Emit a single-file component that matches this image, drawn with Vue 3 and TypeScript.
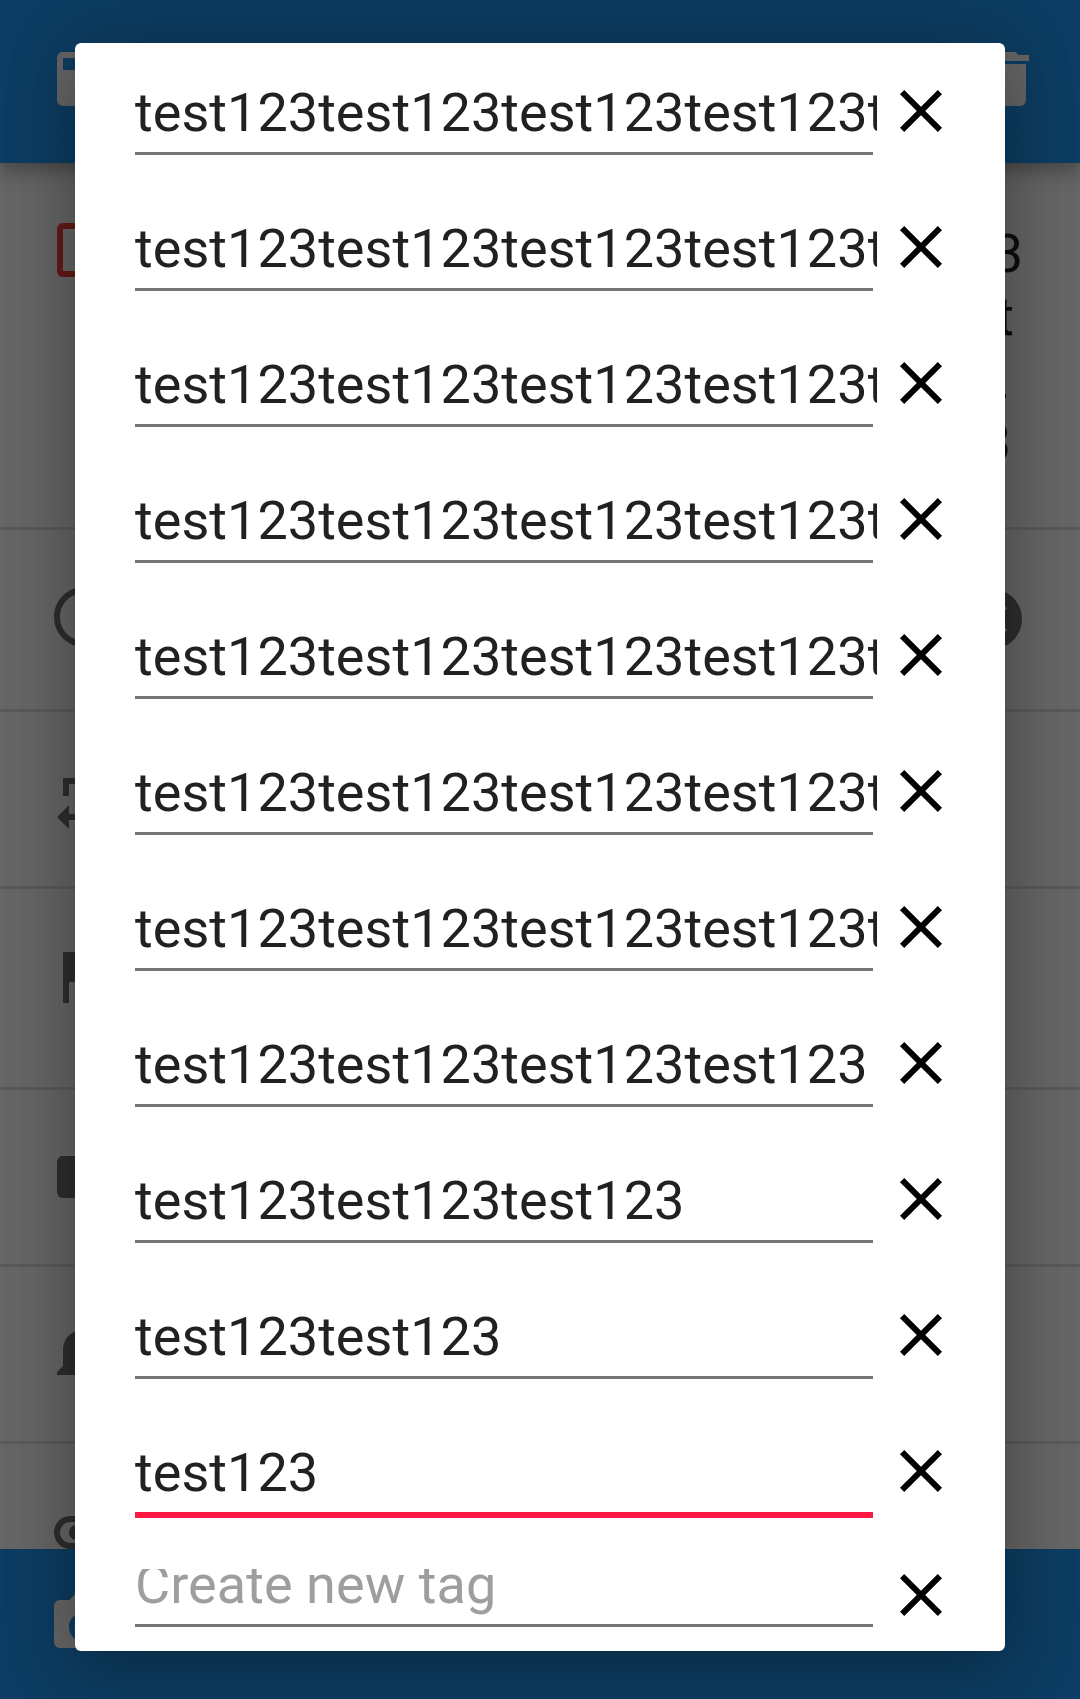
<script setup lang="ts">
interface Tag {
  text: string
  focused?: boolean
}

interface DetailRow {
  name: string
  height: number
  iconTop: number
  path: string
  clearable?: boolean
}

const repeated = (count: number): string => 'test123'.repeat(count)

const tags: Tag[] = [
  ...[11, 10, 9, 8, 7, 6, 5, 4, 3, 2].map((n) => ({ text: repeated(n) })),
  { text: repeated(1), focused: true },
]

const titleEnds = [
  { text: '3', gap: 57 },
  { text: 't', gap: 66 },
  { text: '2', gap: 72 },
  { text: '3', gap: 69 },
]

const icons = {
  save: 'M17 3H5c-1.11 0-2 .9-2 2v14c0 1.1.89 2 2 2h14c1.1 0 2-.9 2-2V7l-4-4zm-5 16c-1.66 0-3-1.34-3-3s1.34-3 3-3 3 1.34 3 3-1.34 3-3 3zm3-10H5V5h10v4z',
  trash: 'M6 19c0 1.1.9 2 2 2h8c1.1 0 2-.9 2-2V7H6v12zM19 4h-3.5l-1-1h-5l-1 1H5v2h14V4z',
  checkbox: 'M19 5v14H5V5h14m0-2H5c-1.1 0-2 .9-2 2v14c0 1.1.9 2 2 2h14c1.1 0 2-.9 2-2V5c0-1.1-.9-2-2-2z',
  close: 'M19 6.41L17.59 5 12 10.59 6.41 5 5 6.41 10.59 12 5 17.59 6.41 19 12 13.41 17.59 19 19 17.59 13.41 12z',
  cancel: 'M12 2C6.47 2 2 6.47 2 12s4.47 10 10 10 10-4.47 10-10S17.53 2 12 2zm5 13.59L15.59 17 12 13.41 8.41 17 7 15.59 10.59 12 7 8.41 8.41 7 12 10.59 15.59 7 17 8.41 13.41 12 17 15.59z',
  camera: 'M9 2L7.17 4H4c-1.1 0-2 .9-2 2v12c0 1.1.9 2 2 2h16c1.1 0 2-.9 2-2V6c0-1.1-.9-2-2-2h-3.17L15 2H9zm3 16c-2.76 0-5-2.24-5-5s2.24-5 5-5 5 2.24 5 5-2.24 5-5 5zM12 9.8a3.2 3.2 0 1 0 0 6.4 3.2 3.2 0 0 0 0-6.4z',
}

const details: DetailRow[] = [
  { name: 'time', height: 182, iconTop: 51, clearable: true, path: 'M11.99 2C6.47 2 2 6.48 2 12s4.47 10 9.99 10C17.52 22 22 17.52 22 12S17.52 2 11.99 2zM12 20c-4.42 0-8-3.58-8-8s3.58-8 8-8 8 3.58 8 8-3.58 8-8 8zm.5-13H11v6l5.25 3.15.75-1.23-4.5-2.67z' },
  { name: 'repeat', height: 177, iconTop: 51, path: 'M7 7h10v3l4-4-4-4v3H5v6h2V7zm10 10H7v-3l-4 4 4 4v-3h12v-6h-2v4z' },
  { name: 'priority', height: 201, iconTop: 51, path: 'M14.4 6L14 4H5v17h2v-7h5.6l.4 2h7V6z' },
  { name: 'tags', height: 177, iconTop: 51, path: 'M17.63 5.84C17.27 5.33 16.67 5 16 5L5 5.01C3.9 5.01 3 5.9 3 7v10c0 1.1.9 1.99 2 1.99L16 19c.67 0 1.27-.33 1.63-.84L22 12l-4.37-6.16z' },
  { name: 'reminder', height: 177, iconTop: 51, path: 'M11.5 22c1.1 0 2-.9 2-2h-4c0 1.1.9 2 2 2zm6.5-6v-5.5c0-3.07-2.13-5.64-5-6.32V3.5c0-.83-.67-1.5-1.5-1.5S10 2.67 10 3.5v.68c-2.87.68-5 3.25-5 6.32V16l-2 2v1h17v-1l-2-2z' },
  { name: 'attachment', height: 105, iconTop: 51, path: 'M2 12.5C2 9.46 4.46 7 7.5 7H18c2.21 0 4 1.79 4 4s-1.79 4-4 4H9.5C8.12 15 7 13.88 7 12.5S8.12 10 9.5 10H17v2H9.41c-.55 0-.55 1 0 1H18c1.1 0 2-.9 2-2s-.9-2-2-2H7.5C5.57 9 4 10.57 4 12.5S5.57 16 7.5 16H17v2H7.5C4.46 18 2 15.54 2 12.5z' },
]
</script>

<template>
  <div class="screen">
    <header class="app-bar">
      <svg class="icon" viewBox="0 0 24 24"><path :d="icons.save" /></svg>
      <svg class="icon" viewBox="0 0 24 24"><path :d="icons.trash" /></svg>
    </header>

    <main class="content">
      <section class="title-row">
        <svg class="icon checkbox" viewBox="0 0 24 24"><path :d="icons.checkbox" /></svg>
        <div class="title">
          <span v-for="(line, i) in titleEnds" :key="i" :style="{ paddingRight: line.gap + 'px' }">{{ line.text }}</span>
        </div>
      </section>
      <section
        v-for="row in details"
        :key="row.name"
        class="detail-row"
        :style="{ height: row.height + 'px', paddingTop: row.iconTop + 'px' }"
      >
        <svg class="icon" viewBox="0 0 24 24"><path :d="row.path" /></svg>
        <svg v-if="row.clearable" class="icon clear" viewBox="0 0 24 24"><path :d="icons.cancel" /></svg>
      </section>
    </main>

    <footer class="bottom-bar">
      <svg class="icon" viewBox="0 0 24 24"><path :d="icons.camera" /></svg>
    </footer>

    <div class="dialog" role="dialog">
      <div v-for="(tag, i) in tags" :key="i" class="tag-row">
        <div class="field" :class="{ focused: tag.focused }">
          <div class="value">{{ tag.text }}</div>
          <div class="underline"></div>
        </div>
        <svg class="icon" viewBox="0 0 24 24"><path :d="icons.close" /></svg>
      </div>
      <div class="tag-row new-row">
        <div class="field">
          <div class="value hint">Create new tag</div>
          <div class="underline"></div>
        </div>
        <svg class="icon" viewBox="0 0 24 24"><path :d="icons.close" /></svg>
      </div>
    </div>
  </div>
</template>

<style>
body {
  margin: 0;
  background: #666;
}
</style>

<style scoped>
.screen {
  position: relative;
  display: flex;
  flex-direction: column;
  width: 1080px;
  height: 1699px;
  overflow: hidden;
  background: #666;
  font-family: Roboto, sans-serif;
  font-size: 54px;
}

.icon {
  display: block;
  flex: none;
  width: 72px;
  height: 72px;
  fill: currentColor;
}

.app-bar {
  position: relative;
  z-index: 1;
  box-sizing: border-box;
  display: flex;
  justify-content: space-between;
  height: 163px;
  padding: 43px 36px 0 48px;
  color: #666;
  background: #0d3d62;
  box-shadow: 0 8px 18px rgba(0, 0, 0, 0.3);
}

.content {
  flex: none;
  height: 1386px;
  overflow: hidden;
  color: #2e2e2e;
}

.title-row {
  box-sizing: border-box;
  display: flex;
  justify-content: space-between;
  height: 367px;
  padding: 51px 0 0 48px;
  border-bottom: 3px solid #5a5a5a;
}

.checkbox {
  color: #651b17;
}

.title {
  display: flex;
  flex-direction: column;
  align-items: flex-end;
  margin-top: 8px;
  color: #0e0e0e;
  line-height: 63px;
}

.detail-row {
  box-sizing: border-box;
  display: flex;
  justify-content: space-between;
  padding: 0 52px 0 48px;
  border-bottom: 3px solid #5a5a5a;
}

.detail-row:last-child {
  border-bottom: 0;
}

.clear {
  margin-top: 2px;
}

.bottom-bar {
  box-sizing: border-box;
  flex: none;
  height: 150px;
  padding: 39px 48px 0;
  color: #666;
  background: #0d3d62;
}

.dialog {
  position: absolute;
  z-index: 2;
  top: 43px;
  left: 75px;
  box-sizing: border-box;
  width: 930px;
  height: 1608px;
  padding: 30px 0 0 60px;
  overflow: hidden;
  border-radius: 6px;
  background: #fff;
  box-shadow:
    0 0 72px rgba(0, 0, 0, 0.17),
    0 20px 72px rgba(0, 0, 0, 0.22);
}

.tag-row {
  display: flex;
  align-items: flex-start;
  height: 136px;
  color: #000;
}

.tag-row > .icon {
  margin: 2px 0 0 8px;
}

.field {
  width: 742px;
}

.value {
  height: 79px;
  overflow: hidden;
  color: #212121;
  letter-spacing: 0.04px;
  line-height: 80px;
  white-space: nowrap;
}

.underline {
  width: 738px;
  height: 3px;
  background: #757575;
}

.focused .underline {
  height: 6px;
  background: #ff1744;
}

.new-row {
  height: 82px;
}

.new-row .value {
  height: 55px;
}

.new-row > .icon {
  margin-top: -10px;
}

.value.hint {
  color: #9e9e9e;
  letter-spacing: 0.06px;
  line-height: 31px;
}
</style>
